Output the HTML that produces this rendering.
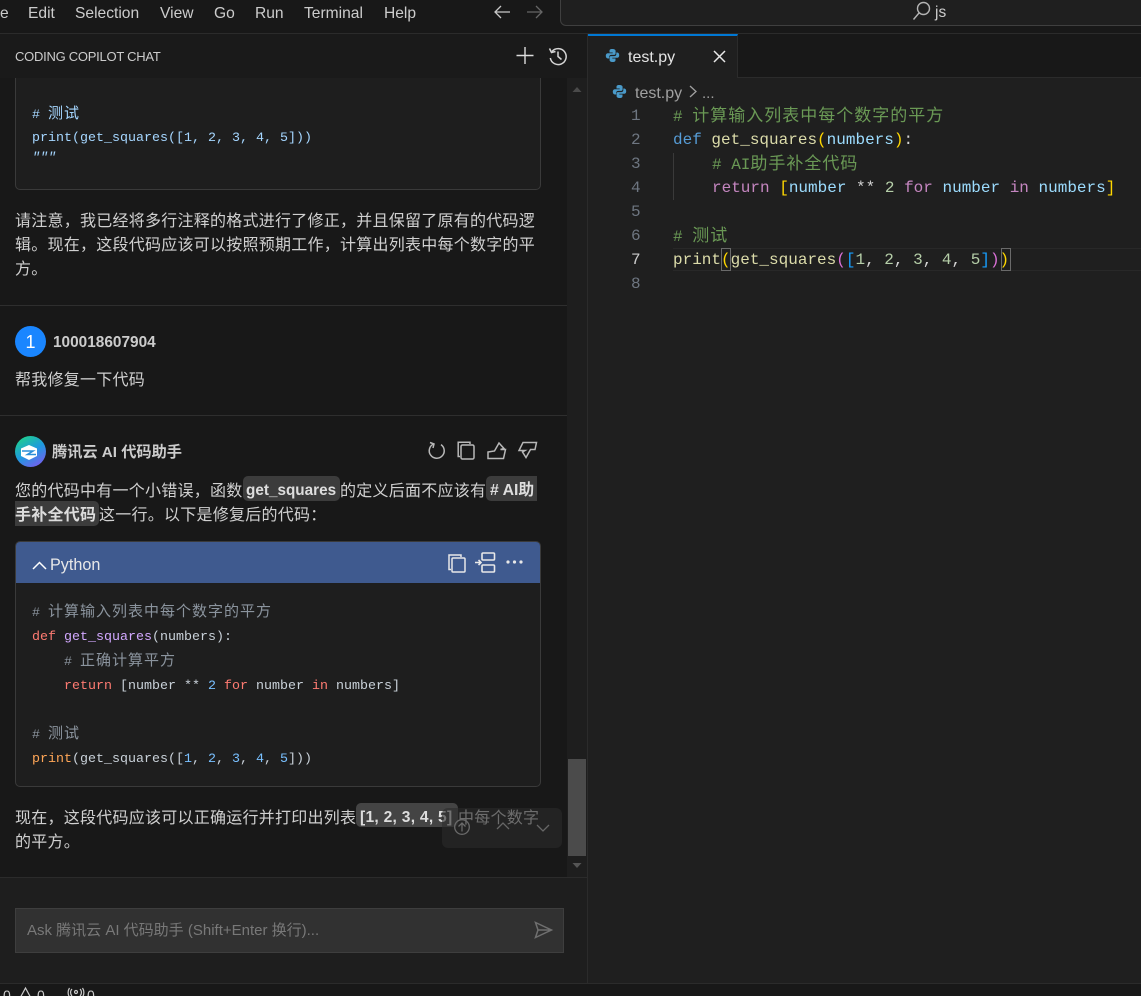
<!DOCTYPE html>
<html lang="zh"><head><meta charset="utf-8"><title>Coding Copilot Chat</title>
<style>
html,body{margin:0;padding:0;background:#181818}
#r{position:relative;width:1141px;height:996px;overflow:hidden;background:#181818;font-family:"Liberation Sans","Noto Sans CJK SC",sans-serif;color:#ccc}
.a{position:absolute}
.t{position:absolute;white-space:nowrap}
.m{font-size:15.6px;color:#ccc;top:4px;line-height:20px}
.p{font-size:16px;letter-spacing:.25px;line-height:24px;color:#d0d0d0;left:15px}
.c{font-family:"Liberation Mono","Noto Sans CJK SC",monospace;font-size:13.33px;line-height:24px;color:#c9d1d9}
.e{font-family:"Liberation Mono","Noto Sans CJK SC",monospace;font-size:16px;line-height:24px;color:#d4d4d4;left:673px}
.z{font-size:15px;letter-spacing:1px}
.ze{font-size:17px;letter-spacing:1px}
.n{font-family:"Liberation Mono",monospace;font-size:16px;line-height:24px;color:#6e7681;left:631px}
.k{background:#3c3c3c;border-radius:5px;font-weight:bold;color:#ddd;position:absolute}
.cm{color:#8b949e}.rd{color:#ff7b72}.pu{color:#d2a8ff}.bl{color:#79c0ff}.or{color:#ffa657}
.kb{color:#569cd6}.kp{color:#c586c0}.y{color:#dcdcaa}.v{color:#9cdcfe}.d{color:#b5cea8}.f{color:#ffd700}.h{color:#da70d6}.s{color:#179fff}
svg{position:absolute;overflow:visible}
</style></head><body><div id="r">

<!-- title bar -->
<div class="a" style="left:0;top:0;width:1141px;height:33px;background:#181818;border-bottom:1px solid #2b2b2b"></div>
<span class="t m" style="left:0">e</span>
<span class="t m" style="left:28px">Edit</span>
<span class="t m" style="left:75px">Selection</span>
<span class="t m" style="left:160px">View</span>
<span class="t m" style="left:214px">Go</span>
<span class="t m" style="left:255px">Run</span>
<span class="t m" style="left:304px">Terminal</span>
<span class="t m" style="left:384px">Help</span>
<svg style="left:494px;top:4px" width="18" height="16" fill="none" stroke="#c8c8c8" stroke-width="1.3"><path d="M1 8H16M7 2L1 8L7 14"/></svg>
<svg style="left:526px;top:4px" width="18" height="16" fill="none" stroke="#666" stroke-width="1.3"><path d="M1 8H16M10 2L16 8L10 14"/></svg>
<div class="a" style="left:560px;top:-6px;width:600px;height:30px;border:1px solid #3f3f3f;border-radius:6px;background:#1f1f1f"></div>
<svg style="left:912px;top:1px" width="20" height="20" fill="none" stroke="#b4b4b4" stroke-width="1.4"><circle cx="11.5" cy="7.5" r="6"/><path d="M7 12L1.5 18.5"/></svg>
<span class="t" style="left:935px;top:3px;font-size:15.5px;line-height:20px;color:#ccc">js</span>

<!-- left panel -->
<div class="a" style="left:0;top:78px;width:567px;height:800px;background:#181818"></div>
<div class="a" style="left:567px;top:78px;width:20px;height:800px;background:#1e1e1e"></div>
<div class="a" style="left:587px;top:34px;width:1px;height:950px;background:#2b2b2b"></div>

<!-- first code block -->
<div class="a" style="left:15px;top:60px;width:524px;height:128px;background:#1e1e1e;border:1px solid #3a3a3a;border-radius:5px"></div>
<div class="a" style="left:0;top:34px;width:587px;height:44px;background:#1a1a1a"></div>
<span class="t" style="left:15px;top:48px;font-size:13px;line-height:18px;color:#ccc;letter-spacing:-.26px">CODING COPILOT CHAT</span>
<svg style="left:516px;top:47px" width="18" height="18" stroke="#ddd" stroke-width="1.4"><path d="M9 0V17M0.5 8.5H17.5"/></svg>
<svg style="left:548px;top:46px" width="20" height="20" fill="none" stroke="#d4d4d4" stroke-width="1.5"><path d="M4 5.5A8 8 0 1 1 2.3 12"/><path d="M1.5 2.5L3.5 6.5L7.5 5.5"/><path d="M10 5.5V10.5L13.5 13.5"/></svg>
<span class="t c" style="left:32px;top:103px;color:#a5d6ff"># <span class="z">测试</span></span>
<span class="t c" style="left:32px;top:127px;color:#a5d6ff">print(get_squares([1, 2, 3, 4, 5]))</span>
<span class="t c" style="left:32px;top:147px;color:#a5d6ff;font-style:italic">"""</span>

<span class="t p" style="top:210px">请注意，我已经将多行注释的格式进行了修正，并且保留了原有的代码逻</span>
<span class="t p" style="top:234px">辑。现在，这段代码应该可以按照预期工作，计算出列表中每个数字的平</span>
<span class="t p" style="top:258px">方。</span>

<div class="a" style="left:0;top:305px;width:567px;height:1px;background:#2e2e2e"></div>

<!-- user -->
<div class="a" style="left:15px;top:326px;width:31px;height:31px;border-radius:50%;background:#1a86ff"></div>
<span class="t" style="left:15px;top:331px;width:31px;text-align:center;font-size:18px;line-height:22px;color:#fff">1</span>
<span class="t" style="left:53px;top:334px;font-size:15.4px;line-height:18px;font-weight:bold;color:#ccc">100018607904</span>
<span class="t p" style="top:369px">帮我修复一下代码</span>

<div class="a" style="left:0;top:415px;width:567px;height:1px;background:#2e2e2e"></div>

<!-- assistant -->
<svg style="left:15px;top:436px" width="31" height="31" viewBox="0 0 31 31">
<defs><linearGradient id="lg" x1="0.2" y1="0" x2="0.8" y2="1"><stop offset="0" stop-color="#1fd18a"/><stop offset=".5" stop-color="#1e9ade"/><stop offset="1" stop-color="#7a5cf0"/></linearGradient></defs>
<circle cx="15.5" cy="15.5" r="15.5" fill="url(#lg)"/>
<path d="M14 9L22 12.5V20L14 24L6 20V12.5Z" fill="#fff"/>
<path d="M7 15H18L12.5 18.5H21" fill="none" stroke="#2a8fd8" stroke-width="1.6"/></svg>
<span class="t" style="left:52px;top:443px;font-size:15.2px;line-height:20px;font-weight:bold;color:#ccc">腾讯云 AI 代码助手</span>
<svg style="left:428px;top:441px" width="18" height="20" fill="none" stroke="#b8b8b8" stroke-width="1.5"><path d="M5.5 3A7.5 7.5 0 1 0 13 3.6"/><path d="M2 1.5L6 3L5 7"/></svg>
<svg style="left:457px;top:441px" width="18" height="19" fill="none" stroke="#b8b8b8" stroke-width="1.5"><path d="M3 15.5H1.2V1.2H13V3"/><rect x="4" y="4" width="13" height="14" rx="1.5"/></svg>
<svg style="left:487px;top:442px" width="20" height="18" fill="none" stroke="#b8b8b8" stroke-width="1.5"><path d="M1 10L7.5 9L12 1L17 6.5L13.5 7.5H18.5L16.5 16.5H1Z"/></svg>
<svg style="left:518px;top:441px" width="20" height="18" fill="none" stroke="#b8b8b8" stroke-width="1.5"><path d="M5 1.5H18.5L17 8.5H12.5L8 16.5L4.5 11L7 9.5H1Z"/></svg>

<span class="t p" style="top:480px">您的代码中有一个小错误，函数</span>
<div class="k" style="left:243px;top:476px;width:97px;height:25px"></div>
<span class="t" style="left:246px;top:480px;font-size:15.3px;line-height:22px;font-weight:bold;color:#ddd">get_squares</span>
<span class="t p" style="left:340px;top:480px">的定义后面不应该有</span>
<div class="k" style="left:486px;top:476px;width:51px;height:25px;border-radius:5px 0 0 5px"></div>
<span class="t" style="left:490px;top:480px;font-size:15.8px;line-height:22px;font-weight:bold;color:#ddd"># AI助</span>
<div class="k" style="left:15px;top:501px;width:84px;height:25px;border-radius:0 5px 5px 0"></div>
<span class="t" style="left:15px;top:504px;font-size:16px;letter-spacing:.25px;line-height:24px;font-weight:bold;color:#ddd">手补全代码</span>
<span class="t p" style="left:99px;top:504px">这一行。以下是修复后的代码：</span>

<!-- second code block -->
<div class="a" style="left:15px;top:541px;width:524px;height:244px;background:#1e1e1e;border:1px solid #3a3a3a;border-radius:5px"></div>
<div class="a" style="left:16px;top:542px;width:524px;height:41px;background:#3f5a8f;border-radius:4px 4px 0 0"></div>
<svg style="left:32px;top:560px" width="15" height="10" fill="none" stroke="#fff" stroke-width="1.5"><path d="M1 9L7.5 2.5L14 9"/></svg>
<span class="t" style="left:50px;top:555px;font-size:16.2px;line-height:20px;color:#e8e8e8">Python</span>
<svg style="left:448px;top:554px" width="18" height="19" fill="none" stroke="#e8e8e8" stroke-width="1.5"><path d="M3 15.5H1V1H13V3"/><rect x="4" y="4" width="13" height="14" rx="1"/></svg>
<svg style="left:475px;top:552px" width="21" height="21" fill="none" stroke="#e8e8e8" stroke-width="1.6"><rect x="7" y="1" width="12.5" height="7" rx="1"/><rect x="7" y="13" width="12.5" height="7" rx="1"/><path d="M0 10.5H6M3.5 8L6 10.5L3.5 13"/></svg>
<svg style="left:506px;top:559px" width="17" height="6" fill="#e8e8e8"><circle cx="2" cy="3" r="1.6"/><circle cx="8.5" cy="3" r="1.6"/><circle cx="15" cy="3" r="1.6"/></svg>

<span class="t c cm" style="left:32px;top:601px"># <span class="z">计算输入列表中每个数字的平方</span></span>
<span class="t c" style="left:32px;top:626px"><span class="rd">def</span> <span class="pu">get_squares</span>(numbers):</span>
<span class="t c cm" style="left:64px;top:650px"># <span class="z">正确计算平方</span></span>
<span class="t c" style="left:64px;top:675px"><span class="rd">return</span> [number ** <span class="bl">2</span> <span class="rd">for</span> number <span class="rd">in</span> numbers]</span>
<span class="t c cm" style="left:32px;top:723px"># <span class="z">测试</span></span>
<span class="t c" style="left:32px;top:748px"><span class="or">print</span>(get_squares([<span class="bl">1</span>, <span class="bl">2</span>, <span class="bl">3</span>, <span class="bl">4</span>, <span class="bl">5</span>]))</span>

<span class="t p" style="top:807px">现在，这段代码应该可以正确运行并打印出列表</span>
<div class="k" style="left:356px;top:803px;width:102px;height:24px;background:#444"></div>
<span class="t" style="left:360px;top:807px;font-size:15.6px;letter-spacing:.27px;line-height:22px;font-weight:bold;color:#ddd">[1, 2, 3, 4, 5]</span>
<span class="t p" style="left:458px;top:807px">中每个数字</span>
<span class="t p" style="top:831px">的平方。</span>

<!-- floating widget -->
<div class="a" style="left:442px;top:808px;width:120px;height:40px;background:rgba(44,44,44,.6);border-radius:6px"></div>
<svg style="left:454px;top:819px" width="16" height="16" fill="none" stroke="#6a6a6a" stroke-width="1.3"><circle cx="8" cy="8" r="7.3"/><path d="M8 12.5V4M4.5 7.5L8 4L11.5 7.5"/></svg>
<svg style="left:496px;top:822px" width="14" height="8" fill="none" stroke="#666" stroke-width="1.3"><path d="M1 7L7 1L13 7"/></svg>
<svg style="left:536px;top:824px" width="14" height="8" fill="none" stroke="#666" stroke-width="1.3"><path d="M1 1L7 7L13 1"/></svg>

<!-- scrollbar -->
<svg style="left:571px;top:85px" width="12" height="8" fill="#4a4a4a"><path d="M1.5 7L6 2L10.5 7Z"/></svg>
<div class="a" style="left:568px;top:759px;width:18px;height:97px;background:#4b4b4b"></div>
<svg style="left:571px;top:861px" width="12" height="8" fill="#555"><path d="M1.5 2H10.5L6 7Z"/></svg>

<!-- chat footer -->
<div class="a" style="left:0;top:877px;width:587px;height:106px;background:#1e1e1e;border-top:1px solid #2b2b2b;box-sizing:border-box"></div>
<div class="a" style="left:15px;top:908px;width:547px;height:43px;background:#313131;border:1px solid #3e3e3e"></div>
<span class="t" style="left:27px;top:921px;font-size:15px;line-height:20px;color:#787878">Ask 腾讯云 AI 代码助手 (Shift+Enter 换行)...</span>
<svg style="left:534px;top:921px" width="19" height="18" fill="none" stroke="#6f6f6f" stroke-width="1.5"><path d="M1.5 1.5L17.5 9L1.5 16.5L4 9ZM4 9H17"/></svg>

<!-- tabs -->
<div class="a" style="left:588px;top:34px;width:553px;height:44px;background:#181818;border-bottom:1px solid #2b2b2b;box-sizing:border-box"></div>
<div class="a" style="left:588px;top:34px;width:150px;height:45px;background:#1f1f1f;border-top:2px solid #0078d4;border-right:1px solid #2b2b2b;box-sizing:border-box"></div>
<svg style="left:605px;top:48px" width="15" height="15" viewBox="0 0 15 15"><path d="M7.3 1C4.8 1 4.5 2 4.5 3V4.5H7.7V5.2H3C1.5 5.2 .8 6.3 .8 7.8S1.5 10.5 3 10.5H4.2V8.8C4.2 7.6 5.1 6.9 6.2 6.9H9.2C10 6.9 10.6 6.2 10.6 5.4V3C10.6 1.8 9.5 1 7.3 1Z" fill="#4a9ac9"/><path d="M7.7 14C10.2 14 10.5 13 10.5 12V10.5H7.3V9.8H12C13.5 9.8 14.2 8.7 14.2 7.2S13.5 4.5 12 4.5H11.3V6.2C11.3 7.4 10.4 8.1 9.3 8.1H5.8C5 8.1 4.6 8.8 4.6 9.6V12C4.6 13.2 5.5 14 7.7 14Z" fill="#4a9ac9"/></svg>
<span class="t" style="left:628px;top:48px;font-size:16px;line-height:20px;color:#e4e4e4">test.py</span>
<svg style="left:713px;top:50px" width="13" height="13" stroke="#e8e8e8" stroke-width="1.5"><path d="M1 1L12 12M12 1L1 12"/></svg>

<!-- editor -->
<div class="a" style="left:588px;top:78px;width:553px;height:905px;background:#1f1f1f"></div>
<svg style="left:612px;top:84px" width="15" height="15" viewBox="0 0 15 15"><path d="M7.3 1C4.8 1 4.5 2 4.5 3V4.5H7.7V5.2H3C1.5 5.2 .8 6.3 .8 7.8S1.5 10.5 3 10.5H4.2V8.8C4.2 7.6 5.1 6.9 6.2 6.9H9.2C10 6.9 10.6 6.2 10.6 5.4V3C10.6 1.8 9.5 1 7.3 1Z" fill="#4a9ac9"/><path d="M7.7 14C10.2 14 10.5 13 10.5 12V10.5H7.3V9.8H12C13.5 9.8 14.2 8.7 14.2 7.2S13.5 4.5 12 4.5H11.3V6.2C11.3 7.4 10.4 8.1 9.3 8.1H5.8C5 8.1 4.6 8.8 4.6 9.6V12C4.6 13.2 5.5 14 7.7 14Z" fill="#4a9ac9"/></svg>
<span class="t" style="left:635px;top:84px;font-size:16px;line-height:20px;color:#a0a0a0">test.py</span>
<svg style="left:689px;top:85px" width="8" height="13" fill="none" stroke="#a0a0a0" stroke-width="1.3"><path d="M1 1L7 6.5L1 12"/></svg>
<span class="t" style="left:702px;top:84px;font-size:15px;line-height:20px;color:#a0a0a0">...</span>

<span class="t n" style="top:104px">1</span>
<span class="t n" style="top:128px">2</span>
<span class="t n" style="top:152px">3</span>
<span class="t n" style="top:176px">4</span>
<span class="t n" style="top:200px">5</span>
<span class="t n" style="top:224px">6</span>
<span class="t n" style="top:248px;color:#ccc">7</span>
<span class="t n" style="top:272px">8</span>

<div class="a" style="left:673px;top:153px;width:1px;height:47px;background:#3a3a3a"></div>
<div class="a" style="left:673px;top:248px;width:468px;height:23px;border-top:1px solid #282828;border-bottom:1px solid #282828;box-sizing:border-box"></div>
<div class="a" style="left:721px;top:248px;width:10px;height:23px;border:1px solid #6a6a6a;box-sizing:border-box"></div>
<div class="a" style="left:1001px;top:248px;width:10px;height:23px;border:1px solid #6a6a6a;box-sizing:border-box"></div>

<span class="t e" style="top:105px;color:#6a9955"># <span class="ze">计算输入列表中每个数字的平方</span></span>
<span class="t e" style="top:128px"><span class="kb">def</span> <span class="y">get_squares</span><span class="f">(</span><span class="v">numbers</span><span class="f">)</span>:</span>
<span class="t e" style="left:712px;top:153px;color:#6a9955"># AI<span class="ze">助手补全代码</span></span>
<span class="t e" style="left:712px;top:176px"><span class="kp">return</span> <span class="f">[</span><span class="v">number</span> ** <span class="d">2</span> <span class="kp">for</span> <span class="v">number</span> <span class="kp">in</span> <span class="v">numbers</span><span class="f">]</span></span>
<span class="t e" style="top:225px;color:#6a9955"># <span class="ze">测试</span></span>
<span class="t e" style="top:248px"><span class="y">print</span><span class="f">(</span><span class="y">get_squares</span><span class="h">(</span><span class="s">[</span><span class="d">1</span>, <span class="d">2</span>, <span class="d">3</span>, <span class="d">4</span>, <span class="d">5</span><span class="s">]</span><span class="h">)</span><span class="f">)</span></span>

<!-- status bar -->
<div class="a" style="left:0;top:983px;width:1141px;height:13px;background:#181818;border-top:1px solid #2b2b2b;box-sizing:border-box"></div>
<span class="t" style="left:3px;top:986px;font-size:14px;line-height:18px;color:#ccc">0</span>
<svg style="left:18px;top:987px" width="15" height="14" fill="none" stroke="#ccc" stroke-width="1.2"><path d="M7.5 1L14 13H1Z"/></svg>
<span class="t" style="left:37px;top:986px;font-size:14px;line-height:18px;color:#ccc">0</span>
<svg style="left:68px;top:988px" width="16" height="10" fill="none" stroke="#ccc" stroke-width="1.2"><circle cx="8" cy="4" r="1.5"/><path d="M4 1A5 5 0 0 0 4 8M12 1A5 5 0 0 1 12 8M1.5 0A8 8 0 0 0 1.5 9M14.5 0A8 8 0 0 1 14.5 9"/></svg>
<span class="t" style="left:87px;top:986px;font-size:14px;line-height:18px;color:#ccc">0</span>

</div></body></html>
